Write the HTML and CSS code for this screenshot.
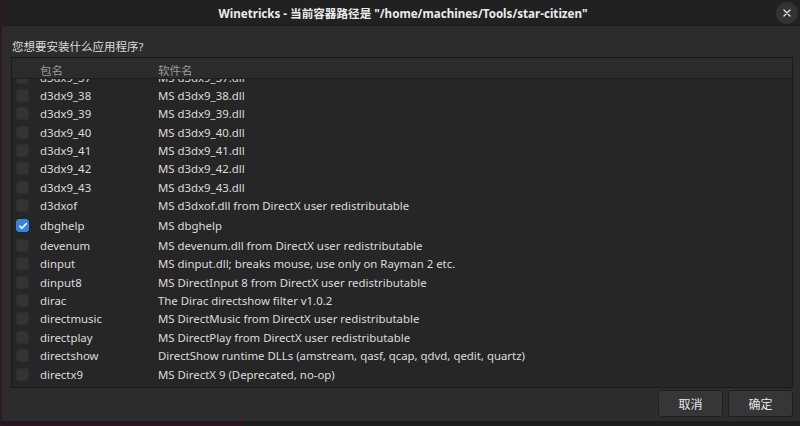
FILE: index.html
```html
<!DOCTYPE html>
<html lang="zh">
<head>
<meta charset="utf-8">
<title>Winetricks</title>
<link rel="stylesheet" href="styles.css">
</head>
<body>
<div class="screen">
  <div class="edge"></div>
  <div class="window">
    <div class="titlebar">
      <div class="title">Winetricks - 当前容器路径是 "/home/machines/Tools/star-citizen"</div>
      <div class="close">
        <svg width="10" height="10" viewBox="0 0 10 10"><path d="M2 2 L8 8 M8 2 L2 8" stroke="#e0e0e0" stroke-width="1.4" stroke-linecap="round"/></svg>
      </div>
    </div>
    <div class="content">
      <div class="question">您想要安装什么应用程序?</div>
      <div class="list">
        <div class="header">
          <div class="hcol1">包名</div>
          <div class="hcol2">软件名</div>
        </div>
        <div class="body">
          <div class="rows">
            <div class="row"><span class="cb"></span><span class="c1">d3dx9_37</span><span class="c2">MS d3dx9_37.dll</span></div>
            <div class="row"><span class="cb"></span><span class="c1">d3dx9_38</span><span class="c2">MS d3dx9_38.dll</span></div>
            <div class="row"><span class="cb"></span><span class="c1">d3dx9_39</span><span class="c2">MS d3dx9_39.dll</span></div>
            <div class="row"><span class="cb"></span><span class="c1">d3dx9_40</span><span class="c2">MS d3dx9_40.dll</span></div>
            <div class="row"><span class="cb"></span><span class="c1">d3dx9_41</span><span class="c2">MS d3dx9_41.dll</span></div>
            <div class="row"><span class="cb"></span><span class="c1">d3dx9_42</span><span class="c2">MS d3dx9_42.dll</span></div>
            <div class="row"><span class="cb"></span><span class="c1">d3dx9_43</span><span class="c2">MS d3dx9_43.dll</span></div>
            <div class="row"><span class="cb"></span><span class="c1">d3dxof</span><span class="c2">MS d3dxof.dll from DirectX user redistributable</span></div>
            <div class="row tall"><span class="cb checked"><svg width="10" height="10" viewBox="0 0 10 10"><path d="M1.8 5.2 L4 7.3 L8.3 2.6" fill="none" stroke="#fff" stroke-width="1.6" stroke-linecap="round" stroke-linejoin="round"/></svg></span><span class="c1">dbghelp</span><span class="c2">MS dbghelp</span></div>
            <div class="row"><span class="cb"></span><span class="c1">devenum</span><span class="c2">MS devenum.dll from DirectX user redistributable</span></div>
            <div class="row"><span class="cb"></span><span class="c1">dinput</span><span class="c2">MS dinput.dll; breaks mouse, use only on Rayman 2 etc.</span></div>
            <div class="row"><span class="cb"></span><span class="c1">dinput8</span><span class="c2">MS DirectInput 8 from DirectX user redistributable</span></div>
            <div class="row"><span class="cb"></span><span class="c1">dirac</span><span class="c2">The Dirac directshow filter v1.0.2</span></div>
            <div class="row"><span class="cb"></span><span class="c1">directmusic</span><span class="c2">MS DirectMusic from DirectX user redistributable</span></div>
            <div class="row"><span class="cb"></span><span class="c1">directplay</span><span class="c2">MS DirectPlay from DirectX user redistributable</span></div>
            <div class="row"><span class="cb"></span><span class="c1">directshow</span><span class="c2">DirectShow runtime DLLs (amstream, qasf, qcap, qdvd, qedit, quartz)</span></div>
            <div class="row"><span class="cb"></span><span class="c1">directx9</span><span class="c2">MS DirectX 9 (Deprecated, no-op)</span></div>
          </div>
        </div>
      </div>
      <div class="buttons">
        <button class="btn">取消</button>
        <button class="btn">确定</button>
      </div>
    </div>
    <div class="taskbar"><div class="tb-left"></div><div class="tb-right"></div></div>
  </div>
</div>
</body>
</html>
```
FILE: styles.css
```css
* { box-sizing: border-box; }
html, body { margin: 0; padding: 0; }
body {
  width: 800px;
  height: 426px;
  overflow: hidden;
  background: #2a1a22;
  font-family: "Noto Sans", "Noto Sans CJK SC", sans-serif;
  color: #dedede;
}
.screen { display: flex; width: 800px; height: 426px; }
.edge { width: 2px; background: #2a1a22; flex: none; }
.window {
  flex: 1;
  display: flex;
  flex-direction: column;
  background: #2c2c2c;
}
.titlebar {
  height: 26px;
  flex: none;
  background: #212121;
  display: flex;
  align-items: center;
  justify-content: center;
  position: relative;
  border-bottom: 1px solid #1c1c1c;
}
.title {
  font-size: 11.6px;
  font-weight: 700;
  color: #ececec;
  margin-left: 4px;
}
.close {
  position: absolute;
  right: 2px;
  top: 2px;
  width: 22px;
  height: 22px;
  border-radius: 50%;
  background: #333333;
  display: flex;
  align-items: center;
  justify-content: center;
}
.content {
  flex: 1;
  display: flex;
  flex-direction: column;
  padding: 10px 7px 0 9px;
}
.question {
  font-size: 11.5px;
  color: #dcdcdc;
  height: 21px;
  line-height: 22px;
  padding-left: 1px;
}
.list {
  height: 331px;
  flex: none;
  border: 1px solid #1a1a1a;
  background: #262626;
  display: flex;
  flex-direction: column;
  overflow: hidden;
}
.header {
  height: 21px;
  flex: none;
  background: #2b2b2b;
  border-bottom: 1px solid #1e1e1e;
  display: flex;
  align-items: center;
  padding-top: 3px;
  font-size: 11.5px;
  color: #9a9a9a;
}
.hcol1 { width: 146px; padding-left: 28px; }
.body { flex: 1; overflow: hidden; }
.rows { margin-top: -11px; }
.row {
  height: 18.35px;
  display: flex;
  align-items: center;
  font-size: 11.4px;
  color: #dcdcdc;
  white-space: nowrap;
}
.row.tall { height: 21.7px; }
.cb {
  width: 13px;
  height: 13px;
  margin-left: 4px;
  margin-right: 11px;
  border-radius: 3px;
  background: #333333;
  border: 1px solid #2f2f2f;
  flex: none;
  display: flex;
  align-items: center;
  justify-content: center;
}
.cb.checked { background: #3584e4; border-color: #3584e4; }
.c1 { width: 118px; flex: none; }
.buttons {
  display: flex;
  justify-content: flex-end;
  gap: 5px;
  margin-top: 2px;
  height: 27px;
}
.btn {
  width: 65px;
  height: 27px;
  background: #363636;
  border: 1px solid #1f1f1f;
  border-radius: 3px;
  color: #e6e6e6;
  font-family: "Noto Sans CJK SC", sans-serif;
  font-size: 12px;
  padding: 0;
}
.taskbar {
  margin-top: auto;
  height: 5px;
  display: flex;
  flex: none;
}
.tb-left { width: 240px; background: #2a1520; }
.tb-right { flex: 1; background: #1d1d1d; }
```
